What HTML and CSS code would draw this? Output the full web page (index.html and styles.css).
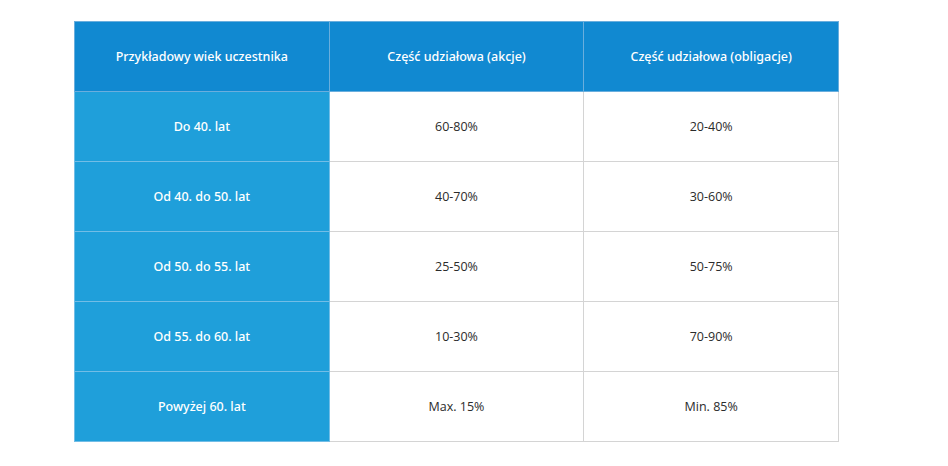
FILE: index.html
```html
<!DOCTYPE html>
<html lang="pl">
<head>
<meta charset="utf-8">
<link rel="stylesheet" href="styles.css">
</head>
<body>
<table class="alloc">
  <colgroup>
    <col class="col">
    <col class="col">
    <col class="col">
  </colgroup>
  <thead>
    <tr>
      <th>Przykładowy wiek uczestnika</th>
      <th>Część udziałowa (akcje)</th>
      <th>Część udziałowa (obligacje)</th>
    </tr>
  </thead>
  <tbody>
    <tr><td class="age">Do 40. lat</td><td>60-80%</td><td>20-40%</td></tr>
    <tr><td class="age">Od 40. do 50. lat</td><td>40-70%</td><td>30-60%</td></tr>
    <tr><td class="age">Od 50. do 55. lat</td><td>25-50%</td><td>50-75%</td></tr>
    <tr><td class="age">Od 55. do 60. lat</td><td>10-30%</td><td>70-90%</td></tr>
    <tr><td class="age">Powyżej 60. lat</td><td>Max. 15%</td><td>Min. 85%</td></tr>
  </tbody>
</table>
</body>
</html>
```
FILE: styles.css
```css
html, body {
  margin: 0;
  padding: 0;
  background: #ffffff;
}
body {
  padding: 21px 0 0 74px;
}
.alloc {
  border-collapse: collapse;
  table-layout: fixed;
  width: 765px;
}
.alloc .col {
  width: 33.333%;
}
.alloc th,
.alloc td {
  height: 69px;
  padding: 0;
  text-align: center;
  vertical-align: middle;
  border: 1px solid #d4d4d4;
}
.alloc th {
  background: #1189d1;
  color: #ffffff;
  font-family: "Noto Sans", sans-serif;
  font-weight: 500;
  font-size: 12.5px;
  border-color: #6aaedd;
}
.alloc td {
  background: #ffffff;
  color: #2b2b2b;
  font-family: "Open Sans", sans-serif;
  font-size: 12.5px;
}
.alloc td.age {
  background: #1f9fda;
  color: #ffffff;
  font-family: "Noto Sans", sans-serif;
  font-weight: 500;
  font-size: 12.5px;
  border-color: #72bde6;
}
```
